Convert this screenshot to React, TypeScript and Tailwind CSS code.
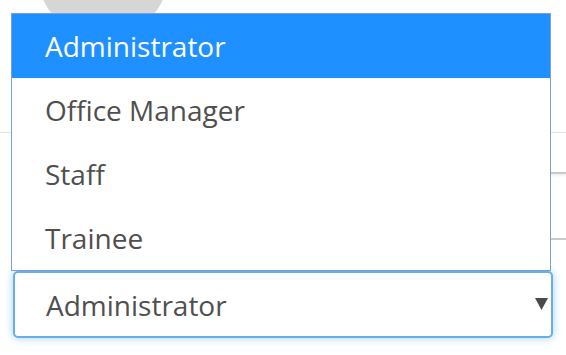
const options = ['Administrator', 'Office Manager', 'Staff', 'Trainee'];

export default function App() {
  return (
    <div
      className="relative w-[566px] h-[355px] overflow-hidden bg-white flex flex-col"
      style={{ fontFamily: '"Open Sans", "Noto Sans", sans-serif' }}
    >
      {/* avatar circle peeking from the top */}
      <div className="-mt-[94px] ml-[37px] w-[132px] h-[132px] shrink-0 rounded-full bg-[#d6d6d6]" />

      {/* page rows behind the open menu */}
      <div className="mt-[94px] h-px shrink-0 bg-[#e3e3e3]" />
      <div className="ml-[30px] h-[41px] shrink-0 border-b-2 border-[#cbcbcb] shadow-[0_2px_2px_rgba(0,0,0,0.06)]" />
      <div className="ml-[30px] h-[66px] shrink-0 border-b-2 border-[#cbcbcb]" />

      {/* select */}
      <div className="mt-[31px] ml-[13px] w-[540px] h-[67px] shrink-0 flex items-center justify-between rounded-[5px] border-2 border-[#66afe9] bg-white pl-[31px] pr-[3px] shadow-[0_0_8px_rgba(102,175,233,0.6)]">
        <span className="text-[28px] leading-none text-[#4f4f4f]">Administrator</span>
        <svg width="13" height="12" viewBox="0 0 13 12" className="mt-[-2px]">
          <polygon points="0,0 13,0 6.5,12" fill="#4a4a4a" />
        </svg>
      </div>

      {/* open option list */}
      <ul className="absolute left-[11px] top-[13px] w-[540px] border border-[#7d9fd9] bg-white">
        {options.map((o, i) => (
          <li
            key={o}
            className={
              i === 0
                ? 'h-[64px] flex items-center pl-[33px] text-[28px] leading-none bg-[#1e90ff] text-white'
                : 'h-[64px] flex items-center pl-[33px] text-[28px] leading-none text-[#4f4f4f]'
            }
          >
            {o}
          </li>
        ))}
      </ul>
    </div>
  );
}
